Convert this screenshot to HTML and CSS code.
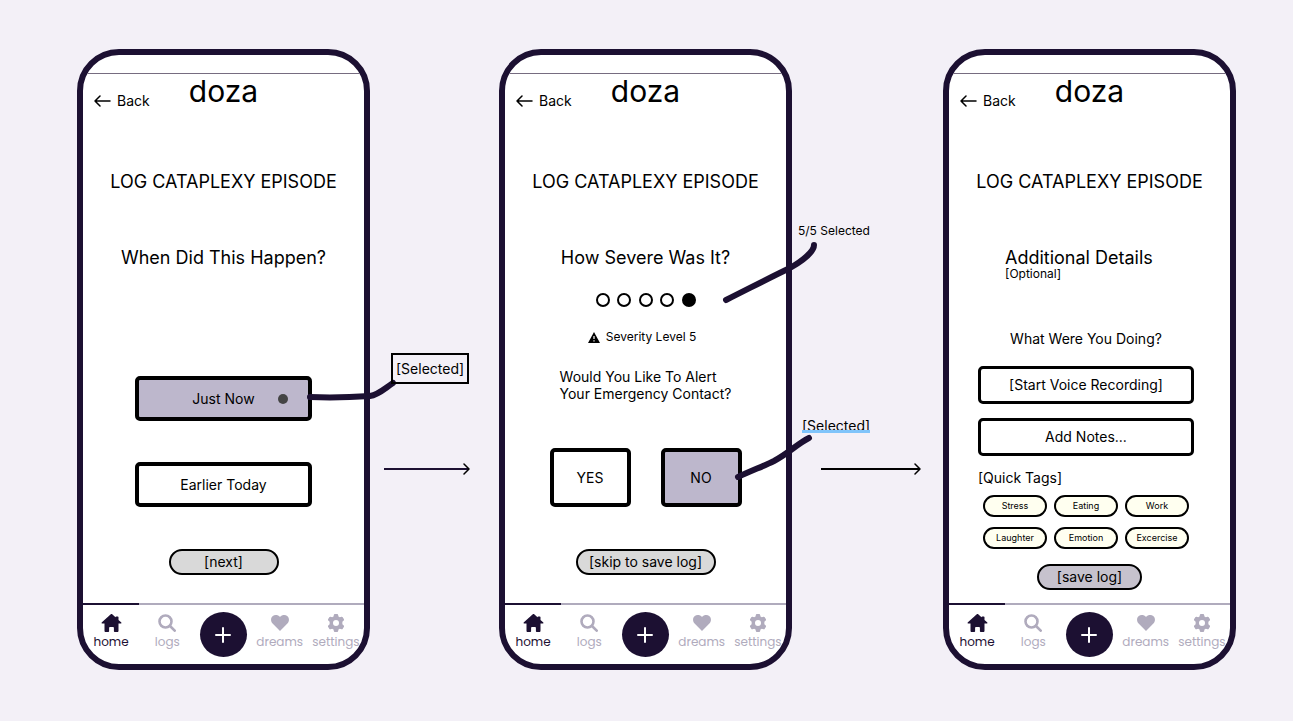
FILE: index.html
```html
<!DOCTYPE html>
<html lang="en">
<head>
<meta charset="utf-8">
<meta name="viewport" content="width=device-width, initial-scale=1">
<title>doza – log cataplexy episode</title>
<link rel="stylesheet" href="styles.css">
</head>
<body>
<svg class="defs" aria-hidden="true">
  <symbol id="back" viewBox="0 0 17 12"><path d="M16 6H1M6 1 1 6l5 5" fill="none" stroke="currentColor" stroke-width="1.500" stroke-linecap="round" stroke-linejoin="round"/></symbol>
  <symbol id="home" viewBox="0 0 20 18"><path d="M9.300.3.400 8.200c-.6.600-.3 1.400.5 1.400H3v7.200c0 .800.400 1.200 1.200 1.200h2.600c.5 0 .8-.3.8-.8v-3.400c0-.6.300-.9.900-.9h3c.6 0 .9.300.9.900v3.400c0 .5.300.8.8.8h2.600c.8 0 1.200-.4 1.200-1.200V9.600h2.100c.8 0 1.100-.8.500-1.400L17 5.900V3.300c0-.5-.3-.8-.8-.8h-1.400c-.5 0-.8.300-.8.700L10.700.3c-.5-.4-.9-.4-1.400 0Z" fill="currentColor"/></symbol>
  <symbol id="search" viewBox="0 0 18 18"><circle cx="7.500" cy="7.500" r="6" fill="none" stroke="currentColor" stroke-width="2.600"/><path d="m12 12 4.700 4.700" fill="none" stroke="currentColor" stroke-width="2.600" stroke-linecap="round"/></symbol>
  <symbol id="heart" viewBox="0 0 18 16"><path d="M9 16 1.600 8.600C-.4 6.500-.5 3.200 1.500 1.300 3.600-.6 6.900-.4 9 2c2.100-2.400 5.400-2.600 7.500-.7 2 1.900 1.900 5.200-.1 7.300Z" fill="currentColor"/></symbol>
  <symbol id="gear" viewBox="0 0 24 24"><path fill="currentColor" fill-rule="evenodd" d="M9.100 1.200C9.200.5 9.700 0 10.400 0h3.200c.7 0 1.200.5 1.300 1.200l.4 2.200 1.800 1 2.200-.8c.6-.2 1.300 0 1.700.6l1.600 2.800c.3.600.2 1.300-.3 1.700L20.500 10.200v3.600l1.800 1.500c.5.400.6 1.100.3 1.700l-1.600 2.800c-.4.600-1.100.8-1.700.6l-2.200-.8-1.800 1-.4 2.200c-.1.700-.6 1.200-1.300 1.200h-3.200c-.7 0-1.200-.5-1.300-1.200l-.4-2.200-1.800-1-2.200.8c-.6.200-1.300 0-1.700-.6L1.400 17c-.3-.6-.2-1.300.3-1.700l1.800-1.500v-3.600L1.700 8.700C1.200 8.300 1.100 7.600 1.400 7L3 4.200c.4-.6 1.100-.8 1.700-.6l2.200.8 1.800-1ZM12 8a4 4 0 1 0 0 8 4 4 0 0 0 0-8Z"/></symbol>
  <symbol id="plus" viewBox="0 0 16 16"><path d="M8 1v14M1 8h14" fill="none" stroke="currentColor" stroke-width="2" stroke-linecap="round"/></symbol>
  <symbol id="warn" viewBox="0 0 12 11"><path d="M6 0 12 11H0Z" fill="currentColor"/><path d="M6 4v3M6 8.300v1.200" stroke="#fff" stroke-width="1.200"/></symbol>
  <symbol id="head" viewBox="0 0 7 12"><path d="m1 1 5 5-5 5" fill="none" stroke="currentColor" stroke-width="1.500" stroke-linecap="round" stroke-linejoin="round"/></symbol>
</svg>

<main class="board">
  <section class="phone">
    <div class="status"></div>
    <header class="top">
      <a class="back" href="#"><svg><use href="#back"/></svg>Back</a>
      <span class="brand">doza</span>
    </header>
    <div class="screen">
      <h1 class="title">LOG CATAPLEXY EPISODE</h1>
      <h2 class="question">When Did This Happen?</h2>
      <div class="choices">
        <button class="box box-wide is-on" type="button">Just Now<span class="dot"></span></button>
        <button class="box box-wide" type="button">Earlier Today</button>
      </div>
      <button class="pill pill-next" type="button">[next]</button>
    </div>
    <nav class="tabs">
      <a class="tab is-active" href="#"><svg class="i-home"><use href="#home"/></svg>home</a>
      <a class="tab" href="#"><svg><use href="#search"/></svg>logs</a>
      <span class="tab"><button class="add" type="button" aria-label="Add log"><svg><use href="#plus"/></svg></button></span>
      <a class="tab" href="#"><svg><use href="#heart"/></svg>dreams</a>
      <a class="tab" href="#"><svg><use href="#gear"/></svg>settings</a>
    </nav>
  </section>

  <div class="link link-one">
    <svg class="strokes" viewBox="0 0 200 621"><path d="M80 348C105 349 125 348 140 347C148 346 154 340 163 334"/></svg>
    <span class="note note-framed">[Selected]</span>
    <div class="arrow"><span class="shaft"></span><svg><use href="#head"/></svg></div>
  </div>

  <section class="phone">
    <div class="status"></div>
    <header class="top">
      <a class="back" href="#"><svg><use href="#back"/></svg>Back</a>
      <span class="brand">doza</span>
    </header>
    <div class="screen">
      <h1 class="title">LOG CATAPLEXY EPISODE</h1>
      <h2 class="question">How Severe Was It?</h2>
      <div class="scale" role="radiogroup" aria-label="Severity">
        <input type="radio" name="severity" aria-label="1">
        <input type="radio" name="severity" aria-label="2">
        <input type="radio" name="severity" aria-label="3">
        <input type="radio" name="severity" aria-label="4">
        <input type="radio" name="severity" aria-label="5" checked>
      </div>
      <p class="level"><svg><use href="#warn"/></svg>Severity Level 5</p>
      <p class="alert">Would You Like To Alert<br>Your Emergency Contact?</p>
      <div class="answers">
        <button class="box box-answer" type="button">YES</button>
        <button class="box box-answer is-on" type="button">NO</button>
      </div>
      <button class="pill pill-skip" type="button">[skip to save log]</button>
    </div>
    <nav class="tabs">
      <a class="tab is-active" href="#"><svg class="i-home"><use href="#home"/></svg>home</a>
      <a class="tab" href="#"><svg><use href="#search"/></svg>logs</a>
      <span class="tab"><button class="add" type="button" aria-label="Add log"><svg><use href="#plus"/></svg></button></span>
      <a class="tab" href="#"><svg><use href="#heart"/></svg>dreams</a>
      <a class="tab" href="#"><svg><use href="#gear"/></svg>settings</a>
    </nav>
  </section>

  <div class="link link-two">
    <svg class="strokes" viewBox="0 0 200 621"><path d="M74 251C98 239 119 228 138 219C152 211 162 202 162 196M86 428C101 421 112 417 122 412C137 404 145 395 157 389"/></svg>
    <span class="note note-small">5/5 Selected</span>
    <span class="note note-marked">[Selected]</span>
    <div class="arrow"><span class="shaft"></span><svg><use href="#head"/></svg></div>
  </div>

  <section class="phone">
    <div class="status"></div>
    <header class="top">
      <a class="back" href="#"><svg><use href="#back"/></svg>Back</a>
      <span class="brand">doza</span>
    </header>
    <div class="screen">
      <h1 class="title">LOG CATAPLEXY EPISODE</h1>
      <div class="details">
        <h2 class="question question-left">Additional Details</h2>
        <p class="optional">[Optional]</p>
        <p class="doing">What Were You Doing?</p>
        <div class="inputs">
          <button class="box box-input" type="button">[Start Voice Recording]</button>
          <button class="box box-input" type="button">Add Notes...</button>
        </div>
        <h3 class="tags-title">[Quick Tags]</h3>
        <div class="tags">
          <button class="tag" type="button">Stress</button>
          <button class="tag" type="button">Eating</button>
          <button class="tag" type="button">Work</button>
          <button class="tag" type="button">Laughter</button>
          <button class="tag" type="button">Emotion</button>
          <button class="tag" type="button">Excercise</button>
        </div>
      </div>
      <button class="pill pill-save" type="button">[save log]</button>
    </div>
    <nav class="tabs">
      <a class="tab is-active" href="#"><svg class="i-home"><use href="#home"/></svg>home</a>
      <a class="tab" href="#"><svg><use href="#search"/></svg>logs</a>
      <span class="tab"><button class="add" type="button" aria-label="Add log"><svg><use href="#plus"/></svg></button></span>
      <a class="tab" href="#"><svg><use href="#heart"/></svg>dreams</a>
      <a class="tab" href="#"><svg><use href="#gear"/></svg>settings</a>
    </nav>
  </section>
</main>
</body>
</html>
```

FILE: styles.css
```css
:root {
  --ink: #1c1032;
  --muted: #b0abbd;
  --lilac: #bdb7cc;
  --canvas: #f3f0f7;
}

* { box-sizing: border-box; margin: 0; }

body {
  background: var(--canvas);
  color: #000;
  font-family: Inter, sans-serif;
  font-size: 14px;
  font-weight: 400;
  line-height: 20px;
}

button { font: inherit; color: inherit; padding: 0; }
a { color: inherit; text-decoration: none; }
h1, h2, h3 { font-weight: 400; }
.defs { position: absolute; width: 0; height: 0; }

.board {
  display: flex;
  min-height: 100vh;
  padding: 49px 57px 51px 77px;
}

/* Device frame */
.phone {
  flex: 0 0 293px;
  display: flex;
  flex-direction: column;
  overflow: hidden;
  background: #fff;
  border: 6px solid var(--ink);
  border-radius: 42px;
}

.status { height: 19px; border-bottom: 1px solid #766c80; }

.top {
  display: grid;
  grid-template-columns: 1fr auto 1fr;
  align-items: start;
  height: 36px;
  padding: 0 11px;
}

.back { display: flex; align-items: center; gap: 6px; padding-top: 17px; }
.back svg { width: 17px; height: 12px; }
.brand { font-size: 30px; line-height: 34px; }

.screen { flex: 1; display: flex; flex-direction: column; align-items: center; }
.title { margin-top: 60px; font-size: 18px; line-height: 24px; }
.question { margin-top: 52px; font-size: 18px; line-height: 24px; }

/* Buttons */
.box {
  display: flex;
  align-items: center;
  justify-content: center;
  background: #fff;
  border: 4px solid #000;
  border-radius: 5px;
}

.is-on { background: var(--lilac); }
.choices { display: grid; gap: 41px; margin-top: 106px; }
.box-wide { position: relative; width: 177px; height: 45px; }

.dot {
  position: absolute;
  right: 20px;
  width: 10px;
  height: 10px;
  border-radius: 50%;
  background: #444;
}

.pill {
  height: 26px;
  background: #d9d9d9;
  border: 2px solid #000;
  border-radius: 13px;
}

.pill-next { width: 110px; margin-top: 42px; }
.pill-skip { width: 140px; margin-top: 42px; }
.pill-save { width: 105px; margin-top: 15px; background: #c6c2cd; }

/* Severity */
.scale { display: flex; justify-content: space-between; width: 100px; margin-top: 23px; }

.scale input {
  appearance: none;
  width: 14px;
  height: 14px;
  margin: 0;
  border: 2px solid #000;
  border-radius: 50%;
}

.scale input:checked { background: #000; }

.level {
  display: flex;
  align-items: center;
  gap: 6px;
  margin-top: 20px;
  padding-right: 7px;
  font-size: 12px;
}

.level svg { width: 12px; height: 11px; }
.alert { margin-top: 21px; line-height: 17px; }
.answers { display: flex; gap: 30px; margin-top: 46px; }
.box-answer { width: 81px; height: 59px; }

/* Details */
.details { align-self: stretch; padding: 0 36px 0 29px; }
.question-left, .optional { padding-left: 27px; }
.optional { font-size: 12px; line-height: 14px; margin-top: -3px; }
.doing { margin-top: 48px; text-align: center; }
.inputs { display: grid; gap: 14px; margin-top: 17px; }
.box-input { height: 38px; border-width: 3px; }
.tags-title { margin-top: 12px; font-size: 14px; }

.tags {
  display: grid;
  grid-template-columns: repeat(3, 1fr);
  gap: 10px 7px;
  margin-top: 7px;
  padding: 0 5px;
}

.tag {
  height: 22px;
  background: #fffff0;
  border: 2px solid #000;
  border-radius: 11px;
  font-size: 9px;
  line-height: 12px;
}

/* Tab bar */
.tabs {
  display: grid;
  grid-template-columns: repeat(5, 1fr);
  height: 61px;
  border-top: 2px solid var(--muted);
}

.tab {
  display: flex;
  flex-direction: column;
  align-items: center;
  padding-top: 9px;
  color: var(--muted);
  font-family: Poppins, Inter, sans-serif;
  font-size: 12px;
  line-height: 20px;
}

.tab svg { flex: none; width: 18px; height: 18px; }
.tab .i-home { width: 21px; height: 18px; }
.tab.is-active { margin-top: -2px; border-top: 2px solid var(--ink); color: var(--ink); }

.add {
  display: flex;
  align-items: center;
  justify-content: center;
  flex: none;
  width: 47px;
  height: 45px;
  margin-top: -2px;
  background: var(--ink);
  border: 0;
  border-radius: 50%;
  color: #fff;
}

.tab .add svg { width: 16px; height: 16px; }

/* Space between two frames: annotations and flow arrow */
.link { position: relative; z-index: 1; display: flex; flex-direction: column; align-items: flex-start; }
.link-one { flex: 129 0 129px; padding: 304px 0 0 14px; }
.link-two { flex: 151 0 151px; padding: 172px 0 0 6px; }

.strokes {
  position: absolute;
  top: 0;
  left: -140px;
  width: 200px;
  height: 621px;
  fill: none;
  stroke: var(--ink);
  stroke-width: 6px;
  stroke-linecap: round;
  pointer-events: none;
}

.note { position: relative; white-space: nowrap; }
.note-framed { margin-left: 7px; padding: 4px 3px; border: 2px solid #000; line-height: 19px; }
.note-small { font-size: 12px; }
.note-marked { margin: 175px 0 0 4px; }

.note-marked::after {
  content: "";
  position: absolute;
  right: 0;
  bottom: 3px;
  left: 0;
  height: 3px;
  background: #7fc4fa;
}

.arrow { display: flex; align-items: center; align-self: stretch; }
.link-one .arrow { margin: 79px 29px 0 0; color: var(--ink); }
.link-two .arrow { margin: 27px 22px 0 23px; }
.shaft { flex: 1; height: 2px; margin-right: -6px; background: currentColor; }
.arrow svg { width: 7px; height: 12px; color: #000; }
```
